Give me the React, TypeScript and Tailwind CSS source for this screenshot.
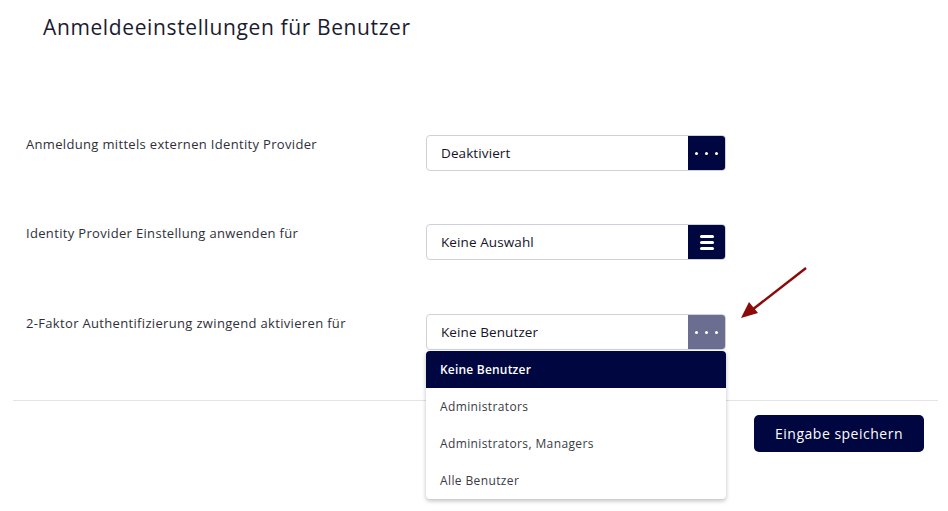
const NAVY = 'bg-[#00063f]'

function Dots() {
  return (
    <div className="flex items-center gap-[7px]">
      <span className="h-[3px] w-[3px] rounded-full bg-white" />
      <span className="h-[3px] w-[3px] rounded-full bg-white" />
      <span className="h-[3px] w-[3px] rounded-full bg-white" />
    </div>
  )
}

function Bars() {
  return (
    <div className="flex flex-col gap-[3px]">
      <span className="h-[3px] w-[14px] rounded-full bg-white" />
      <span className="h-[3px] w-[14px] rounded-full bg-white" />
      <span className="h-[3px] w-[14px] rounded-full bg-white" />
    </div>
  )
}

type FieldProps = {
  value: string
  icon: 'dots' | 'bars'
  faded?: boolean
}

function Field({ value, icon, faded }: FieldProps) {
  return (
    <div className="flex h-[36px] w-[300px] overflow-hidden rounded-[4px] border border-[#cfd1da] bg-white">
      <div className="flex flex-1 items-center pl-[14px] text-[13.5px] tracking-[0.1px] text-[#141428]">
        {value}
      </div>
      <div
        className={
          faded
            ? 'flex w-[37px] items-center justify-center bg-[#6b6d91]'
            : `flex w-[37px] items-center justify-center ${NAVY}`
        }
      >
        {icon === 'dots' ? <Dots /> : <Bars />}
      </div>
    </div>
  )
}

const options = ['Keine Benutzer', 'Administrators', 'Administrators, Managers', 'Alle Benutzer']

export default function App() {
  return (
    <div className="relative h-[511px] w-[948px] overflow-hidden bg-white font-['Open_Sans',sans-serif]">
      <h1 className="pl-[43px] pt-[14px] text-[21px] leading-[26px] tracking-[0.62px] text-[#1b1b2f]">
        Anmeldeeinstellungen für Benutzer
      </h1>

      <div className="mt-[95px] flex flex-col">
        <div className="flex">
          <div className="w-[426px] pl-[26px] text-[13px] tracking-[0.33px] text-[#2f2f3a]">
            Anmeldung mittels externen Identity Provider
          </div>
          <Field value="Deaktiviert" icon="dots" />
        </div>

        <div className="mt-[53px] flex">
          <div className="w-[426px] pl-[26px] text-[13px] tracking-[0.33px] text-[#2f2f3a]">
            Identity Provider Einstellung anwenden für
          </div>
          <Field value="Keine Auswahl" icon="bars" />
        </div>

        <div className="mt-[54px] flex">
          <div className="w-[426px] pl-[26px] text-[13px] tracking-[0.33px] text-[#2f2f3a]">
            2-Faktor Authentifizierung zwingend aktivieren für
          </div>
          <div className="relative">
            <Field value="Keine Benutzer" icon="dots" faded />
            <ul className="absolute left-0 top-full z-10 mt-[1px] w-[300px] overflow-hidden rounded-b-[4px] bg-white shadow-[0_2px_4px_rgba(0,0,0,0.25)]">
              {options.map((opt, i) => (
                <li
                  key={opt}
                  className={
                    i === 0
                      ? `flex h-[37px] items-center rounded-t-[4px] pl-[14px] text-[12px] font-semibold tracking-[0.2px] text-white ${NAVY}`
                      : 'flex h-[37px] items-center pl-[14px] text-[12px] tracking-[0.38px] text-[#3a3a44]'
                  }
                >
                  {opt}
                </li>
              ))}
            </ul>
          </div>
        </div>
      </div>

      <div className="ml-[13px] mr-[10px] mt-[50px] h-px bg-[#e4e4e7]" />

      <div className="mt-[14px] flex justify-end pr-[24px]">
        <button
          className={`h-[37px] w-[170px] rounded-[5px] text-[14px] tracking-[0.5px] text-white ${NAVY}`}
        >
          Eingabe speichern
        </button>
      </div>

      <svg className="absolute left-0 top-0" width="948" height="511" viewBox="0 0 948 511">
        <line x1="806" y1="268" x2="752" y2="310" stroke="#8b0a0a" strokeWidth="2.5" />
        <polygon points="741,318 749,302 758,313" fill="#8b0a0a" />
      </svg>
    </div>
  )
}
